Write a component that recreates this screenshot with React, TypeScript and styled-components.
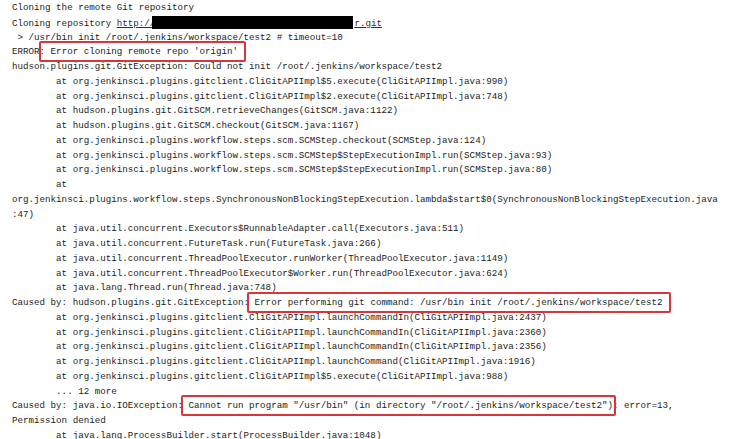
import React from 'react';
import styled, { createGlobalStyle } from 'styled-components';

const GlobalStyle = createGlobalStyle`
  html, body {
    margin: 0;
    padding: 0;
    background: #ffffff;
  }
`;

const Page = styled.div`
  width: 730px;
  height: 439px;
  overflow: hidden;
  background: #ffffff;
`;

const Log = styled.pre`
  margin: 0;
  padding: 1px 0 0 12px;
  font-family: 'Liberation Mono', 'DejaVu Sans Mono', monospace;
  font-size: 9.2px;
  line-height: 14.75px;
  color: #1c1c1c;
  white-space: pre;
  tab-size: 8;
`;

const Line = styled.div`
  height: 14.75px;
`;

const Link = styled.span`
  text-decoration: underline;
  color: #2e2e2e;
`;

const Redacted = styled.span`
  display: inline-block;
  width: 201px;
  height: 13px;
  margin-left: -3px;
  margin-right: 1px;
  vertical-align: -3px;
  background: #000000;
`;

const Marked = styled.span<{ $left: number; $right: number }>`
  position: relative;

  &::after {
    content: '';
    position: absolute;
    left: -${p => p.$left}px;
    right: -${p => p.$right}px;
    top: -5px;
    bottom: -5px;
    border: 2px solid #d7363c;
    border-radius: 2px;
    pointer-events: none;
  }
`;

const trace1 = [
  '\tat org.jenkinsci.plugins.gitclient.CliGitAPIImpl$5.execute(CliGitAPIImpl.java:990)',
  '\tat org.jenkinsci.plugins.gitclient.CliGitAPIImpl$2.execute(CliGitAPIImpl.java:748)',
  '\tat hudson.plugins.git.GitSCM.retrieveChanges(GitSCM.java:1122)',
  '\tat hudson.plugins.git.GitSCM.checkout(GitSCM.java:1167)',
  '\tat org.jenkinsci.plugins.workflow.steps.scm.SCMStep.checkout(SCMStep.java:124)',
  '\tat org.jenkinsci.plugins.workflow.steps.scm.SCMStep$StepExecutionImpl.run(SCMStep.java:93)',
  '\tat org.jenkinsci.plugins.workflow.steps.scm.SCMStep$StepExecutionImpl.run(SCMStep.java:80)',
  '\tat',
  'org.jenkinsci.plugins.workflow.steps.SynchronousNonBlockingStepExecution.lambda$start$0(SynchronousNonBlockingStepExecution.java',
  ':47)',
  '\tat java.util.concurrent.Executors$RunnableAdapter.call(Executors.java:511)',
  '\tat java.util.concurrent.FutureTask.run(FutureTask.java:266)',
  '\tat java.util.concurrent.ThreadPoolExecutor.runWorker(ThreadPoolExecutor.java:1149)',
  '\tat java.util.concurrent.ThreadPoolExecutor$Worker.run(ThreadPoolExecutor.java:624)',
  '\tat java.lang.Thread.run(Thread.java:748)',
];

const trace2 = [
  '\tat org.jenkinsci.plugins.gitclient.CliGitAPIImpl.launchCommandIn(CliGitAPIImpl.java:2437)',
  '\tat org.jenkinsci.plugins.gitclient.CliGitAPIImpl.launchCommandIn(CliGitAPIImpl.java:2360)',
  '\tat org.jenkinsci.plugins.gitclient.CliGitAPIImpl.launchCommandIn(CliGitAPIImpl.java:2356)',
  '\tat org.jenkinsci.plugins.gitclient.CliGitAPIImpl.launchCommand(CliGitAPIImpl.java:1916)',
  '\tat org.jenkinsci.plugins.gitclient.CliGitAPIImpl$5.execute(CliGitAPIImpl.java:988)',
  '\t... 12 more',
];

const App: React.FC = () => {
  return (
    <Page>
      <GlobalStyle />
      <Log>
        <Line>Cloning the remote Git repository</Line>
        <Line>
          Cloning repository <Link>http://<Redacted />r.git</Link>
        </Line>
        <Line> &gt; /usr/bin init /root/.jenkins/workspace/test2 # timeout=10</Line>
        <Line>
          ERROR: <Marked $left={12} $right={8}>Error cloning remote repo 'origin'</Marked>
        </Line>
        <Line>hudson.plugins.git.GitException: Could not init /root/.jenkins/workspace/test2</Line>
        {trace1.map((l, i) => (
          <Line key={'a' + i}>{l}</Line>
        ))}
        <Line>
          Caused by: hudson.plugins.git.GitException:{' '}
          <Marked $left={8} $right={8}>
            Error performing git command: /usr/bin init /root/.jenkins/workspace/test2
          </Marked>
        </Line>
        {trace2.map((l, i) => (
          <Line key={'b' + i}>{l}</Line>
        ))}
        <Line>
          Caused by: java.io.IOException:{' '}
          <Marked $left={7} $right={3}>
            Cannot run program "/usr/bin" (in directory "/root/.jenkins/workspace/test2")
          </Marked>
          : error=13,
        </Line>
        <Line>Permission denied</Line>
        <Line>{'\tat java.lang.ProcessBuilder.start(ProcessBuilder.java:1048)'}</Line>
      </Log>
    </Page>
  );
};

export default App;
